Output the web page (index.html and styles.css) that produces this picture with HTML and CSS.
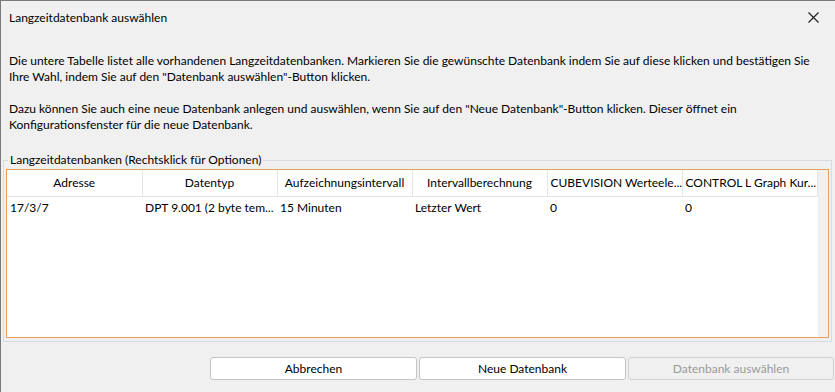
FILE: index.html
```html
<!DOCTYPE html>
<html lang="de">
<head>
  <meta charset="UTF-8" />
  <title>Langzeitdatenbank auswählen</title>
  <link rel="stylesheet" href="styles.css">
</head>
<body>
  <div class="window">
    <div class="titlebar">
      <span class="title">Langzeitdatenbank auswählen</span>
      <span class="close">
        <svg width="11" height="11" viewBox="0 0 11 11"><path d="M0.5 0.5 L10.5 10.5 M10.5 0.5 L0.5 10.5" stroke="#1a1a1a" stroke-width="1.1" fill="none"/></svg>
      </span>
    </div>

    <div class="content">
      <p>Die untere Tabelle listet alle vorhandenen Langzeitdatenbanken. Markieren Sie die gewünschte Datenbank indem Sie auf diese klicken und bestätigen Sie<br>Ihre Wahl, indem Sie auf den "Datenbank auswählen"-Button klicken.</p>
      <p>Dazu können Sie auch eine neue Datenbank anlegen und auswählen, wenn Sie auf den "Neue Datenbank"-Button klicken. Dieser öffnet ein<br>Konfigurationsfenster für die neue Datenbank.</p>

      <fieldset class="group">
        <legend>Langzeitdatenbanken (Rechtsklick für Optionen)</legend>
        <div class="grid-frame">
          <div class="grid">
            <table>
              <thead>
                <tr>
                  <th>Adresse</th>
                  <th>Datentyp</th>
                  <th>Aufzeichnungsintervall</th>
                  <th>Intervallberechnung</th>
                  <th>CUBEVISION Werteele...</th>
                  <th>CONTROL L Graph Kur...</th>
                </tr>
              </thead>
              <tbody>
                <tr>
                  <td>17/3/7</td>
                  <td>DPT 9.001 (2 byte tem...</td>
                  <td>15 Minuten</td>
                  <td>Letzter Wert</td>
                  <td>0</td>
                  <td>0</td>
                </tr>
              </tbody>
            </table>
          </div>
          <div class="gutter"></div>
        </div>
      </fieldset>

      <div class="buttons">
        <button>Abbrechen</button>
        <button>Neue Datenbank</button>
        <button disabled>Datenbank auswählen</button>
      </div>
    </div>
  </div>
</body>
</html>
```

FILE: styles.css
```css
html, body {
  margin: 0;
  height: 100%;
}
body {
  font-family: Lato, "Noto Sans", sans-serif;
  font-size: 12px;
  color: #000;
  background: #f0f0f0;
  overflow: hidden;
}
.window {
  height: 100%;
  border-top: 1px solid #7a7a7a;
  border-left: 1px solid #7a7a7a;
  box-sizing: border-box;
  background: #f0f0f0;
}
.titlebar {
  height: 32px;
  display: flex;
  align-items: center;
  justify-content: space-between;
  padding: 0 16px 0 8px;
}
.close {
  display: flex;
  width: 11px;
  height: 11px;
}
p {
  margin: 0 0 16px 8px;
  line-height: 16px;
  white-space: nowrap;
}
p:first-child {
  margin-top: 20px;
}
.group {
  margin: 20px 0 0 2px;
  width: 829px;
  box-sizing: border-box;
  border: 1px solid #d5dbe0;
  padding: 0 2px 3px 2px;
}
.group legend {
  padding: 0 2px;
  margin-left: 2px;
  line-height: 14px;
}
.grid-frame {
  display: flex;
  height: 169px;
  border: 1px solid #e2a25e;
  margin-top: 2px;
  box-sizing: border-box;
}
.grid {
  flex: 1;
  background: #fff;
}
.gutter {
  width: 10px;
  background: #f0f0f0;
}
table {
  border-collapse: collapse;
  table-layout: fixed;
}
th, td {
  width: 135px;
  max-width: 135px;
  white-space: nowrap;
  overflow: hidden;
  box-sizing: border-box;
  font-weight: normal;
}
th {
  height: 26px;
  text-align: center;
  border-right: 1px solid #e5e5e5;
  border-bottom: 1px solid #e5e5e5;
  padding: 0 3px;
}
td {
  height: 22px;
  text-align: left;
  padding: 0 3px;
}
.buttons {
  display: flex;
  gap: 2px;
  margin: 15px 0 0 209px;
}
button {
  width: 207px;
  height: 23px;
  font-family: inherit;
  font-size: 12px;
  color: #000;
  background: #fff;
  border: 1px solid #c4c4c4;
  border-radius: 3px;
  padding: 0;
}
button:disabled {
  background: #f0f0f0;
  color: #9a9a9a;
  border-color: #d0d0d0;
  width: 206px;
}
```
